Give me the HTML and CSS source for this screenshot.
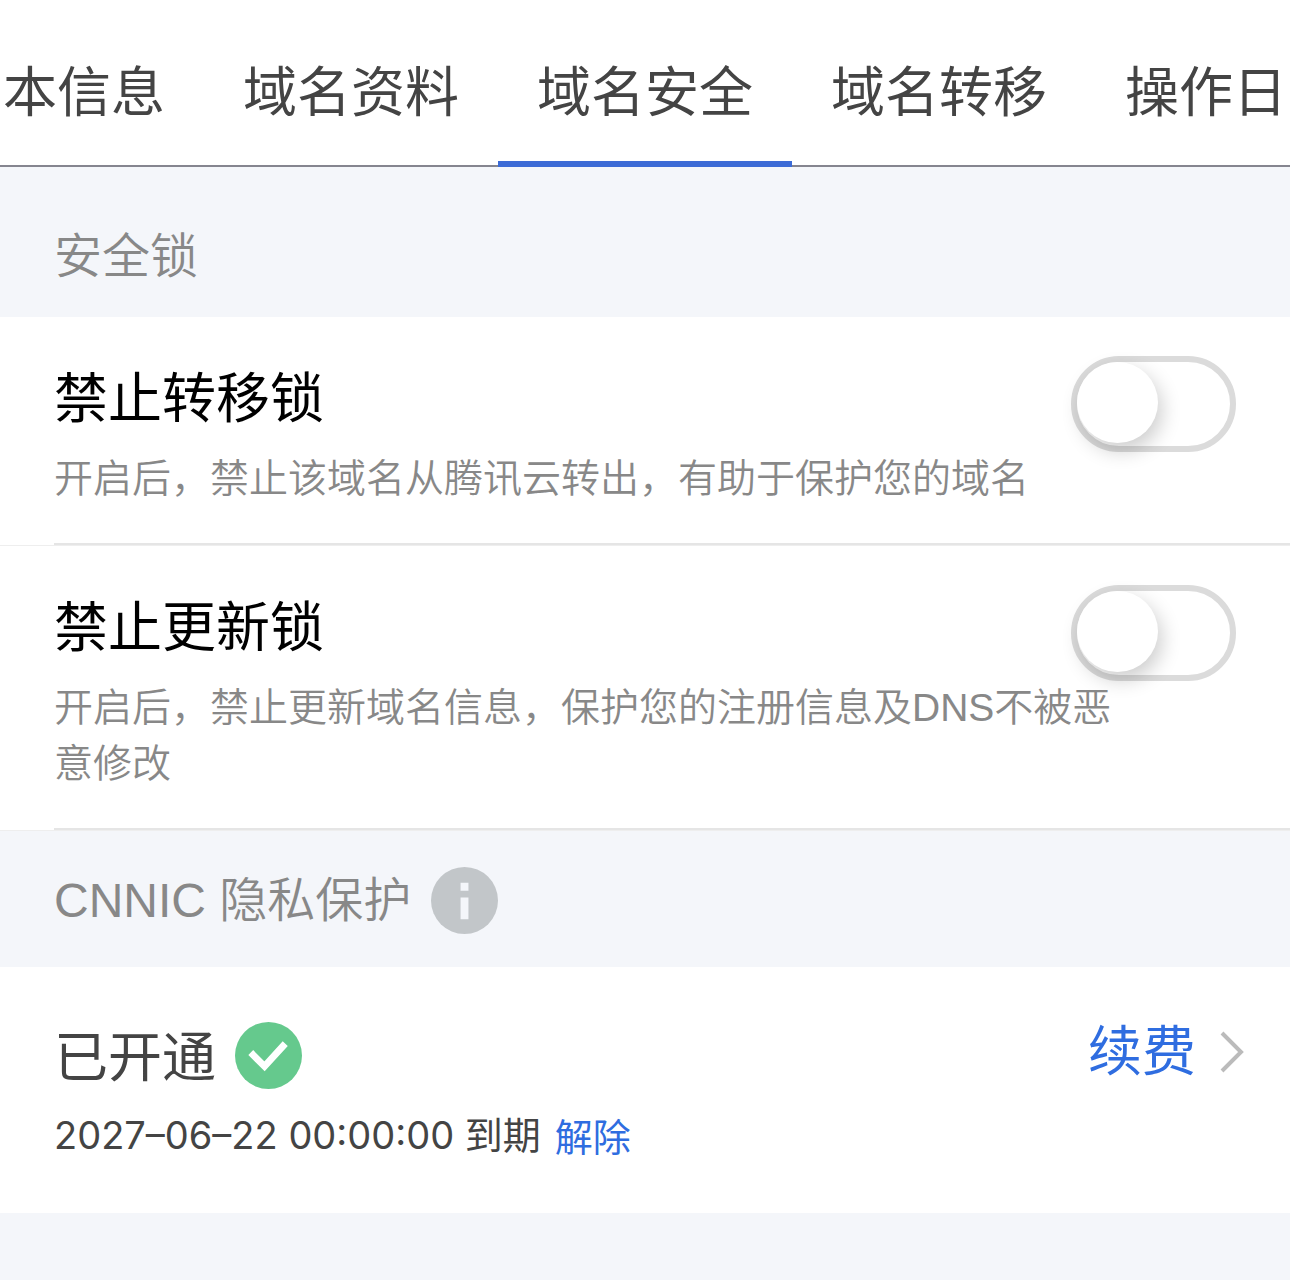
FILE: index.html
```html
<!DOCTYPE html>
<html lang="zh-CN">
<head>
    <meta charset="UTF-8">
    <meta name="viewport" content="width=device-width, initial-scale=1">
    <title>域名安全</title>
    <link rel="stylesheet" href="styles.css">
</head>
<body>
<nav class="tabs">
    <a href="#info" class="tab tab-edge">本信息</a>
    <a href="#profile" class="tab">域名资料</a>
    <a href="#security" class="tab active">域名安全</a>
    <a href="#transfer" class="tab">域名转移</a>
    <a href="#logs" class="tab tab-edge">操作日</a>
</nav>

<main>
    <h2 class="section-title section-first">安全锁</h2>
    <div class="lock-item">
        <div class="lock-body">
            <label class="lock-name" for="transfer-lock">禁止转移锁</label>
            <input type="checkbox" class="switch" id="transfer-lock">
            <p class="lock-desc">开启后，禁止该域名从腾讯云转出，有助于保护您的域名</p>
        </div>
    </div>
    <div class="lock-item">
        <div class="lock-body">
            <label class="lock-name" for="update-lock">禁止更新锁</label>
            <input type="checkbox" class="switch" id="update-lock">
            <p class="lock-desc">开启后，禁止更新域名信息，保护您的注册信息及DNS不被恶意修改</p>
        </div>
    </div>

    <div class="section-title">
        <h2 class="section-text">CNNIC 隐私保护</h2>
        <button type="button" class="info-btn" aria-label="说明">
            <svg class="icon" viewBox="0 0 68 68">
                <circle cx="34" cy="34" r="34" fill="#c2c6c9"/>
                <path d="M30 16h8v8h-8zM30 31h8v22h-8z" fill="#f4f6fa"/>
            </svg>
        </button>
    </div>
    <div class="privacy">
        <div class="privacy-info">
            <div class="status">
                <span class="status-text">已开通</span>
                <svg class="icon" viewBox="0 0 68 68">
                    <circle cx="34" cy="34" r="34" fill="#65c98d"/>
                    <path d="M16 31L30 45L51 22" fill="none" stroke="#fff" stroke-width="7"/>
                </svg>
            </div>
            <div class="expire">
                <span>2027–06–22 00:00:00 到期</span>
                <a href="#remove" class="remove-link">解除</a>
            </div>
        </div>
        <a href="#renew" class="renew-link">
            续费
            <svg class="arrow" viewBox="0 0 24 42">
                <path d="M2 2L21 21L2 40" fill="none" stroke="#bbb" stroke-width="4"/>
            </svg>
        </a>
    </div>
</main>
</body>
</html>
```
FILE: styles.css
```css
* {
    box-sizing: border-box;
}
body {
    margin: 0;
    background-color: #f4f6fa;
    color: #444;
    font-family: "Liberation Sans", "Noto Sans CJK SC", sans-serif;
    font-size: 54px;
}
a {
    text-decoration: none;
}

/* Tab bar, keeps the middle tab centered */
.tabs {
    display: flex;
    justify-content: center;
    overflow: hidden;
    background: linear-gradient(#85858f, #85858f) bottom / 100% 2px no-repeat #fff;
}
.tab {
    flex: none;
    padding: 26px 39px 0;
    line-height: 135px;
    border-bottom: 6px solid transparent;
    color: #444;
}
.tab.active {
    border-bottom-color: #3c6bd6;
}
.tab-edge:first-child {
    padding-left: 3px;
}
.tab-edge:last-child {
    padding-right: 3px;
}

.section-title {
    display: flex;
    align-items: center;
    gap: 20px;
    margin: 0;
    padding: 2px 54px 0;
    height: 136px;
    font-size: 48px;
    font-weight: 350;
    color: #888;
}
.section-first {
    height: 150px;
    padding-top: 20px;
}
.section-text {
    margin: 0;
    padding-bottom: 8px;
    font-size: 48px;
    font-weight: 350;
}

/* Lock rows */
.lock-item {
    background-color: #fff;
    border-bottom: 1px solid #eee;
}
.lock-body {
    display: grid;
    grid-template-columns: 1fr auto;
    margin-left: 54px;
    padding: 39px 54px 36px 0;
    border-bottom: 2px solid #e5e5e5;
}
.lock-name {
    line-height: 87px;
    color: #000;
}
.lock-desc {
    grid-column: 1 / -1;
    grid-row: 2;
    margin: 8px 0 0;
    padding-right: 108px;
    font-size: 39px;
    font-weight: 350;
    line-height: 56px;
    color: #888;
}
.switch {
    appearance: none;
    grid-column: 2;
    grid-row: 1 / 3;
    width: 165px;
    height: 96px;
    margin: 0;
    border: 6px solid #dbdbdb;
    border-radius: 48px;
    background-color: #fff;
    cursor: pointer;
}
.switch::before {
    content: "";
    display: block;
    width: 81px;
    height: 81px;
    border-radius: 50%;
    background-color: #fff;
    box-shadow: 4px 8px 20px rgba(0, 0, 0, 0.2);
}
.switch:checked {
    border-color: #65c98d;
    background-color: #65c98d;
}
.switch:checked::before {
    margin-left: auto;
}

/* Privacy protection */
.icon {
    display: block;
    flex: none;
    width: 67px;
    height: 67px;
}
.info-btn {
    padding: 0;
    border: none;
    background: none;
    cursor: pointer;
}
.privacy {
    display: flex;
    justify-content: space-between;
    align-items: flex-start;
    padding: 44px 46px 48px 54px;
    background-color: #fff;
}
.status {
    display: flex;
    align-items: center;
    gap: 19px;
}
.status-text {
    padding-top: 6px;
    line-height: 82px;
}
.expire {
    display: flex;
    gap: 14px;
    margin-top: 8px;
    font-family: Inter, "Noto Sans CJK SC", sans-serif;
    font-size: 38px;
    line-height: 56px;
}
.remove-link {
    padding-top: 2px;
    color: #2f6de0;
}
.renew-link {
    display: flex;
    align-items: center;
    gap: 24px;
    line-height: 82px;
    color: #2f6de0;
}
.arrow {
    width: 24px;
    height: 42px;
}
```
